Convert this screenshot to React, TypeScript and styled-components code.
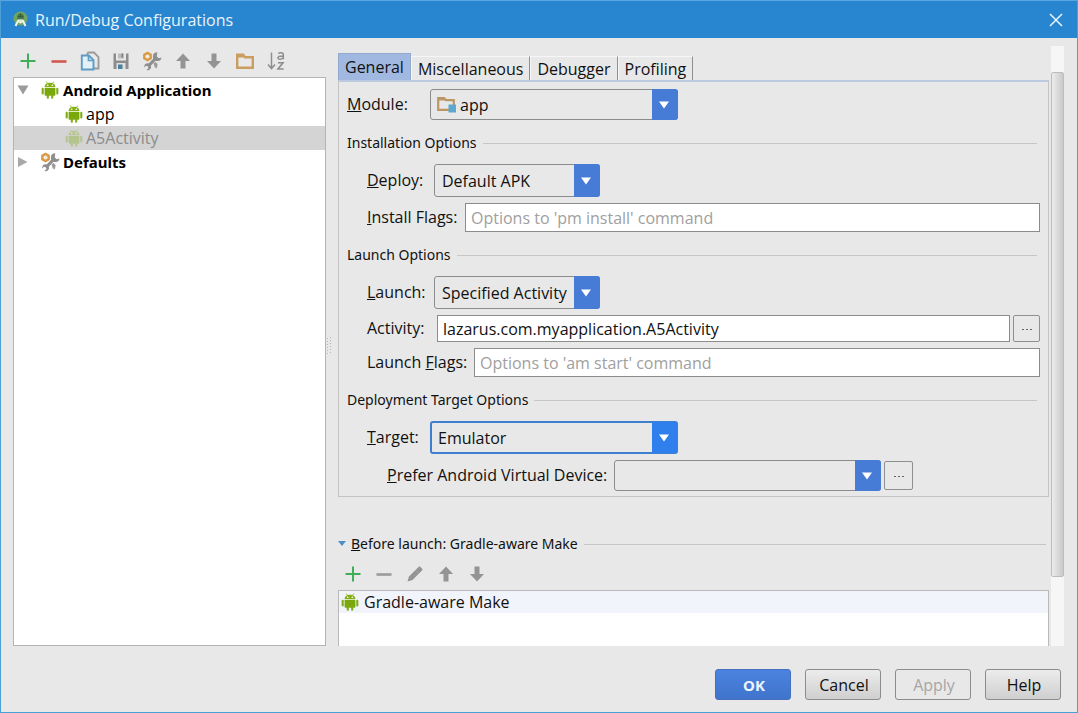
import React, { useState } from 'react';
import styled, { createGlobalStyle, css } from 'styled-components';

const GlobalStyle = createGlobalStyle`
  * { box-sizing: border-box; }
  body { margin: 0; background: #e8e8e8; }
  body, button, input, select {
    font-family: "Open Sans", "Noto Sans", sans-serif;
    font-size: 16px;
    line-height: 20px;
    color: #111;
  }
`;

const Dialog = styled.div`
  display: flex;
  flex-direction: column;
  height: 100vh;
  min-height: 560px;
  background: #e8e8e8;
  border: 1px solid #4d9fd8;
  border-top-color: #58a5df;
`;

const TitleBar = styled.header`
  flex: none;
  display: flex;
  align-items: center;
  gap: 6px;
  height: 37px;
  padding: 0 13px 0 11px;
  background: #2885cf;
`;

const Title = styled.h1`
  flex: 1;
  margin: 0;
  font-size: 16px;
  font-weight: 400;
  color: #eaf4fc;
`;

const PlainButton = styled.button`
  display: flex;
  align-items: center;
  justify-content: center;
  padding: 0;
  border: 0;
  background: none;
`;

const Main = styled.main`
  flex: 1;
  min-height: 0;
  display: flex;
  padding: 8px 13px 0 12px;
`;

const Sidebar = styled.aside`
  flex: none;
  width: 313px;
  display: flex;
  flex-direction: column;
`;

const Toolbar = styled.div`
  flex: none;
  display: flex;
  height: 31px;
  padding-bottom: 1px;
`;

const ToolButton = styled(PlainButton)`
  width: 31px;
  padding-right: 1px;
`;

const Tree = styled.ul`
  flex: 1;
  margin: 0;
  padding: 0;
  list-style: none;
  background: #fff;
  border: 1px solid #b4b4b4;
`;

const TreeRow = styled.li<{ $depth?: number; $selected?: boolean; $group?: boolean }>`
  display: flex;
  align-items: center;
  gap: 3px;
  height: 24px;
  padding-left: ${(p) => (p.$depth ? 51 : 3)}px;
  color: ${(p) => (p.$selected ? '#8c8c8c' : '#000')};
  background: ${(p) => (p.$selected ? '#d4d4d4' : 'transparent')};
  ${(p) =>
    p.$group &&
    css`
      font-family: "Noto Sans", "Open Sans", sans-serif;
      font-size: 15px;
      font-weight: 700;
    `}
`;

const Expander = styled(PlainButton)`
  width: 12px;
  margin-right: 8px;
`;

const IconSlot = styled.span`
  flex: none;
  width: 20px;
  display: flex;
  justify-content: center;
`;

const Splitter = styled.div`
  flex: none;
  width: 12px;
  display: flex;
  align-items: center;
`;

const ScrollArea = styled.section`
  flex: 1;
  min-width: 0;
  display: flex;
  flex-direction: column;
  overflow: hidden;
`;

const Tabs = styled.div`
  flex: none;
  display: flex;
  align-items: flex-end;
  height: 34px;
  margin-right: 1px;
`;

const Tab = styled.button<{ $active?: boolean }>`
  height: 24px;
  padding: 0 6px;
  border: 1px solid #f6f6f6;
  border-right-color: #8f8f8f;
  border-bottom: 0;
  background: #e8e8e8;
  white-space: nowrap;
  ${(p) =>
    p.$active &&
    css`
      height: 27px;
      border-color: #93aad0;
      background: #a1b9e0;
    `}
`;

const TabPanel = styled.div`
  flex: none;
  display: flex;
  flex-direction: column;
  padding: 7px 8px 5px;
  border: 1px solid #c4c4c4;
  border-top: 2px solid #bccbe0;
`;

const Row = styled.div<{ $indent?: number; $gap?: number }>`
  display: flex;
  align-items: center;
  margin-top: ${(p) => p.$gap ?? 6}px;
  padding-left: ${(p) => p.$indent ?? 20}px;
`;

const Label = styled.label<{ $width: number }>`
  flex: none;
  width: ${(p) => p.$width}px;
  padding-bottom: 1px;
  white-space: nowrap;
`;

const Heading = styled.h2<{ $gap?: number }>`
  display: flex;
  align-items: center;
  gap: 6px;
  height: 24px;
  margin: ${(p) => p.$gap ?? 11}px 3px 3px 0;
  font-family: "Noto Sans", "Open Sans", sans-serif;
  font-size: 14px;
  font-weight: 400;
  &::after {
    content: '';
    flex: 1;
    height: 1px;
    background: #c6c6c6;
  }
`;

const SelectBox = styled.div<{ $width: number; $height: number; $focus?: boolean }>`
  position: relative;
  flex: none;
  display: flex;
  width: ${(p) => p.$width}px;
  height: ${(p) => p.$height}px;
  border: ${(p) => (p.$focus ? '2px solid #3f7fd0' : '1px solid #8c8c8c')};
  border-radius: 3px;
  background: #e8e8e8;
`;

const NativeSelect = styled.select<{ $pad: number }>`
  appearance: none;
  width: 100%;
  padding: 0 24px 0 ${(p) => p.$pad}px;
  border: 0;
  outline: 0;
  background: transparent;
`;

const SelectArrow = styled.span<{ $focus?: boolean }>`
  position: absolute;
  top: -1px;
  right: ${(p) => (p.$focus ? -2 : -1)}px;
  bottom: -1px;
  width: 26px;
  padding-right: 2px;
  display: flex;
  align-items: center;
  justify-content: center;
  border-radius: 0 3px 3px 0;
  background: ${(p) => (p.$focus ? '#2f80ed' : '#467bd6')};
  pointer-events: none;
`;

const SelectIcon = styled.span`
  position: absolute;
  left: 5px;
  top: 4px;
  display: flex;
  pointer-events: none;
`;

const TextInput = styled.input<{ $height: number }>`
  flex: 1;
  min-width: 0;
  height: ${(p) => p.$height}px;
  padding: 0 5px;
  border: 1px solid #8c8c8c;
  outline: 0;
  background: #fff;
  &::placeholder {
    color: #a0a0a0;
    opacity: 1;
  }
`;

const MoreButton = styled(PlainButton)<{ $width: number; $height: number }>`
  flex: none;
  width: ${(p) => p.$width}px;
  height: ${(p) => p.$height}px;
  margin-left: 3px;
  border: 1px solid #8f8f8f;
  border-radius: 2px;
  background: #e8e8e8;
`;

const BeforeLaunch = styled.div`
  flex: 1;
  min-height: 0;
  display: flex;
  flex-direction: column;
  padding-top: 35px;
`;

const BeforeHeader = styled.div`
  display: flex;
  align-items: center;
  gap: 5px;
  height: 24px;
  margin-bottom: 3px;
  h2 {
    flex: 1;
    margin: 0 3px 0 0;
  }
`;

const TaskList = styled.ul`
  flex: 1;
  margin: 0;
  padding: 0;
  list-style: none;
  background: #fff;
  border: 1px solid #b9b9b9;
  border-bottom: 0;
`;

const Task = styled.li`
  display: flex;
  align-items: center;
  gap: 5px;
  height: 22px;
  padding-left: 2px;
  background: #f1f4fa;
`;

const ScrollTrack = styled.div`
  flex: none;
  width: 13px;
  margin-left: 2px;
  display: flex;
  flex-direction: column;
  padding-top: 26px;
  background: #f6f6f6;
`;

const ScrollThumb = styled.div`
  height: 88%;
  border: 1px solid #bdbdbd;
  border-radius: 2px;
  background: linear-gradient(to right, #ececec, #c9c9c9);
`;

const Footer = styled.footer`
  flex: none;
  display: flex;
  justify-content: flex-end;
  gap: 14px;
  padding: 23px 16px 12px;
`;

const ActionButton = styled.button<{ $primary?: boolean }>`
  width: 76px;
  height: 31px;
  padding: 0 0 0 2px;
  border: 1px solid #8c8c8c;
  border-radius: 3px;
  background: linear-gradient(#ececec, #cfcfcf);
  &:disabled {
    color: #a6a6a6;
    background: #e8e8e8;
  }
  ${(p) =>
    p.$primary &&
    css`
      border-color: #4470bd;
      background: linear-gradient(#4a83e0, #4074cb);
      color: #eef4fd;
      font-family: "Noto Sans", "Open Sans", sans-serif;
      font-size: 15px;
      font-weight: 700;
    `}
`;

const Svg = ({ size = 20, children }: { size?: number; children: React.ReactNode }) => (
  <svg width={size} height={size} viewBox={`0 0 ${size} ${size}`} fill="none" aria-hidden="true">
    {children}
  </svg>
);

const Android = ({ faded }: { faded?: boolean }) => (
  <svg width="18" height="18" viewBox="0 0 18 18" fill="none" opacity={faded ? 0.35 : 1} aria-hidden="true">
    <path d="M5.200 .5l1.500 2.300M12.800 .5l-1.500 2.300" stroke="#9fc23c" strokeWidth="1" />
    <path d="M3.600 6.200C3.600 3.300 6 1.800 9 1.800s5.400 1.500 5.400 4.400z" fill="#86b016" />
    <circle cx="6.700" cy="4.300" r=".8" fill="#fff" />
    <circle cx="11.300" cy="4.300" r=".8" fill="#fff" />
    <path d="M3.600 7h10.800v6.700a1 1 0 0 1-1 1H4.600a1 1 0 0 1-1-1z" fill="#7aa80c" />
    <path d="M1.700 7.800v4.600M16.300 7.800v4.600M6.800 13v3.700M11.200 13v3.700" stroke="#7fac12" strokeWidth="2.100" strokeLinecap="round" />
  </svg>
);

const Plus = () => <Svg><path d="M10 2.500v15M2.500 10h15" stroke="#3fae58" strokeWidth="2" /></Svg>;
const Minus = ({ color }: { color: string }) => (
  <Svg><path d="M2.500 10.500h15" stroke={color} strokeWidth="2.600" /></Svg>
);
const ArrowUp = () => <Svg><path d="M10 2.500l7 7.500H12.500v7.500h-5V10H3z" fill="#949494" /></Svg>;
const ArrowDown = () => <Svg><path d="M10 17.500l7-7.500H12.500V2.500h-5V10H3z" fill="#949494" /></Svg>;
const Pencil = () => (
  <Svg>
    <path d="M2.500 17.500l1.500-5 6.500-6.500 3.500 3.500-6.500 6.500z" fill="#949494" />
    <path d="M10.500 6l3-3c.6-.6 1.300-.5 1.900 0l1.600 1.600c.5.6.6 1.300 0 1.900l-3 3z" fill="#949494" />
  </Svg>
);
const Copy = () => (
  <Svg>
    <path d="M7.500 1.500H14l4.500 4.500v11.500H14" stroke="#9a9a9a" strokeWidth="1.800" />
    <path d="M7.500 1.500v2.500" stroke="#9a9a9a" strokeWidth="1.800" />
    <path d="M1.800 4.500h7l4.700 4.700v9.300H1.800z" fill="#e3f0f8" stroke="#5d9cc5" strokeWidth="1.900" />
    <path d="M8.500 4.500v5h5" stroke="#5d9cc5" strokeWidth="1.700" />
  </Svg>
);
const Save = () => (
  <Svg>
    <path d="M2.500 2.500H5V9.500h10V2.500h2.500v15.500h-15z" fill="#8d8d8d" />
    <path d="M7 2.500h6V7.500H7z" fill="#bcbcbc" />
    <path d="M10.500 2.500H12v4h-1.500z" fill="#808080" />
    <path d="M5.500 12h9v6h-9z" fill="#e0e0e0" />
    <path d="M7 13.500h4.500V18H7z" fill="#4d7f9e" />
  </Svg>
);
const Wrench = () => (
  <Svg>
    <path d="M6 15.500l7.500-8" stroke="#8e8e8e" strokeWidth="3.200" />
    <path d="M15.300 1.200a4.400 4.400 0 1 0 4.300 5.300l-2.800.8-2-1.700z" fill="#8e8e8e" />
    <path d="M4.300 12.500a3.600 3.600 0 0 1 4.200 5.300c-.8 1.300-2.600 1.900-4 1.200l2-2-.6-1.800-2-.4-1.700 1.700c-.2-1.800.6-3.400 2.100-4z" fill="#8e8e8e" />
    <path d="M11.500 12.200l2.200-1.200 2 2.200-1 4.300-2-1.200z" fill="#9c9c9c" />
    <path d="M5.500 .5l4.400 2.500v5l-4.400 2.500L1.100 8V3z" fill="#d99b47" />
    <circle cx="5.500" cy="5.500" r="2.100" fill="#f6ead8" />
  </Svg>
);
const Folder = () => (
  <Svg>
    <path d="M2.200 16.800V3.800h6l1.600 2.400h8v10.600z" stroke="#c99e60" strokeWidth="2.400" />
    <path d="M2 3h6.500v3.500H2z" fill="#c99e60" />
  </Svg>
);
const ModuleFolder = () => (
  <Svg>
    <path d="M2.200 15.800V4h6l1.600 2.200h8v9.600z" stroke="#bd9763" strokeWidth="2.200" />
    <path d="M2 3h6.500v3.500H2z" fill="#bd9763" />
    <path d="M12.500 10.500H20v8h-7.500z" fill="#5ea7cf" />
  </Svg>
);
const SortAz = () => (
  <Svg>
    <path d="M5.500 1.500v16M2 13.500l3.500 4 3.500-4" stroke="#8e8e8e" strokeWidth="1.500" />
    <path d="M12.300 2.500c1-1.200 5-1.300 5 1v4.800M17.300 5c-2.500 0-5.400 0-5.400 1.700 0 2.200 4.200 2 5.400-.2" stroke="#8e8e8e" strokeWidth="1.500" />
    <path d="M12 11.800h5l-5 6.200h5.700" stroke="#8e8e8e" strokeWidth="1.600" />
  </Svg>
);
const Caret = ({ color, right }: { color: string; right?: boolean }) => (
  <Svg size={12}><path d={right ? 'M1 1v10l9.500-5z' : 'M.5 1.500h11L6 10.500z'} fill={color} /></Svg>
);
const DropArrow = () => <Svg size={12}><path d="M1 2.500h10L6 9.500z" fill="#fff" /></Svg>;
const Dots = () => <Svg size={12}><path d="M1 6.500h2M5 6.500h2M9 6.500h2" stroke="#666" /></Svg>;
const StudioLogo = () => (
  <Svg size={17}>
    <circle cx="8.500" cy="7.500" r="7" fill="#71a565" />
    <path d="M5 6a3.500 3.500 0 0 1 7 0v2.500H5z" fill="#4b7c49" />
    <path d="M8.500 2.500v4M6 5.500h5" stroke="#2f5a3c" strokeWidth="1.200" />
    <path d="M3.500 15l2.700-5.500 2.300 2 2.300-2 2.700 5.500" stroke="#eef3e8" strokeWidth="2" strokeLinejoin="round" />
    <path d="M6.500 8.500h4v2.500h-4z" fill="#e3ecdc" />
  </Svg>
);
const Grip = () => (
  <svg width="6" height="20" viewBox="0 0 6 20" aria-hidden="true">
    {[1, 4, 7, 10, 13, 16].map((y) => (
      <g key={y} fill="#b4b4b4">
        <rect x="1" y={y + 1} width="1" height="1" />
        <rect x="4" y={y} width="1" height="1" />
      </g>
    ))}
  </svg>
);

type DropdownProps = {
  id: string;
  options: string[];
  width: number;
  height?: number;
  pad?: number;
  focus?: boolean;
  icon?: React.ReactNode;
};

const Dropdown = ({ id, options, width, height = 33, pad = 7, focus, icon }: DropdownProps) => (
  <SelectBox $width={width} $height={height} $focus={focus}>
    {icon && <SelectIcon>{icon}</SelectIcon>}
    <NativeSelect id={id} $pad={pad}>
      {options.map((o) => <option key={o}>{o}</option>)}
    </NativeSelect>
    <SelectArrow $focus={focus}><DropArrow /></SelectArrow>
  </SelectBox>
);

const sidebarTools: [string, React.ReactNode][] = [
  ['Add', <Plus />],
  ['Remove', <Minus color="#d2574f" />],
  ['Copy', <Copy />],
  ['Save', <Save />],
  ['Edit defaults', <Wrench />],
  ['Move up', <ArrowUp />],
  ['Move down', <ArrowDown />],
  ['New folder', <Folder />],
  ['Sort', <SortAz />],
];

const taskTools: [string, React.ReactNode][] = [
  ['Add task', <Plus />],
  ['Remove task', <Minus color="#9a9a9a" />],
  ['Edit task', <Pencil />],
  ['Move task up', <ArrowUp />],
  ['Move task down', <ArrowDown />],
];

const tabs = ['General', 'Miscellaneous', 'Debugger', 'Profiling'];

export default function App() {
  const [tab, setTab] = useState('General');
  const [activity, setActivity] = useState('lazarus.com.myapplication.A5Activity');

  return (
    <>
      <GlobalStyle />
      <Dialog>
        <TitleBar>
          <StudioLogo />
          <Title>Run/Debug Configurations</Title>
          <PlainButton aria-label="Close">
            <Svg size={16}><path d="M2 2l12 12M14 2L2 14" stroke="#eaf4fc" strokeWidth="1.500" /></Svg>
          </PlainButton>
        </TitleBar>

        <Main>
          <Sidebar>
            <Toolbar>
              {sidebarTools.map(([name, icon]) => (
                <ToolButton key={name} aria-label={name}>{icon}</ToolButton>
              ))}
            </Toolbar>
            <Tree>
              <TreeRow $group>
                <Expander aria-label="Collapse"><Caret color="#9b9b9b" /></Expander>
                <IconSlot><Android /></IconSlot>
                Android Application
              </TreeRow>
              <TreeRow $depth={1}><Android />app</TreeRow>
              <TreeRow $depth={1} $selected><Android faded />A5Activity</TreeRow>
              <TreeRow $group>
                <Expander aria-label="Expand"><Caret color="#a8a8a8" right /></Expander>
                <IconSlot><Wrench /></IconSlot>
                Defaults
              </TreeRow>
            </Tree>
          </Sidebar>

          <Splitter><Grip /></Splitter>

          <ScrollArea>
            <Tabs role="tablist">
              {tabs.map((t) => (
                <Tab key={t} role="tab" aria-selected={t === tab} $active={t === tab} onClick={() => setTab(t)}>
                  {t}
                </Tab>
              ))}
            </Tabs>
            <TabPanel role="tabpanel">
              <Row $indent={0} $gap={0}>
                <Label htmlFor="module" $width={83}><u>M</u>odule:</Label>
                <Dropdown id="module" options={['app']} width={248} height={31} pad={29} icon={<ModuleFolder />} />
              </Row>

              <Heading>Installation Options</Heading>
              <Row>
                <Label htmlFor="deploy" $width={67}><u>D</u>eploy:</Label>
                <Dropdown id="deploy" options={['Default APK']} width={166} />
              </Row>
              <Row>
                <Label htmlFor="install-flags" $width={98}><u>I</u>nstall Flags:</Label>
                <TextInput id="install-flags" $height={29} placeholder="Options to 'pm install' command" />
              </Row>

              <Heading>Launch Options</Heading>
              <Row>
                <Label htmlFor="launch" $width={67}><u>L</u>aunch:</Label>
                <Dropdown id="launch" options={['Specified Activity']} width={166} />
              </Row>
              <Row>
                <Label htmlFor="activity" $width={70}>Activity:</Label>
                <TextInput id="activity" $height={27} value={activity} onChange={(e) => setActivity(e.target.value)} />
                <MoreButton aria-label="Choose activity" $width={27} $height={27}><Dots /></MoreButton>
              </Row>
              <Row>
                <Label htmlFor="launch-flags" $width={107}>Launch <u>F</u>lags:</Label>
                <TextInput id="launch-flags" $height={29} placeholder="Options to 'am start' command" />
              </Row>

              <Heading>Deployment Target Options</Heading>
              <Row>
                <Label htmlFor="target" $width={63}><u>T</u>arget:</Label>
                <Dropdown id="target" options={['Emulator']} width={248} pad={6} focus />
              </Row>
              <Row $indent={40}>
                <Label htmlFor="avd" $width={227}><u>P</u>refer Android Virtual Device:</Label>
                <Dropdown id="avd" options={['']} width={267} height={31} />
                <MoreButton aria-label="Manage devices" $width={29} $height={29}><Dots /></MoreButton>
              </Row>
            </TabPanel>

            <BeforeLaunch>
              <BeforeHeader>
                <PlainButton aria-label="Collapse before launch">
                  <Svg size={8}><path d="M0 1h8L4 6z" fill="#4b8fc9" /></Svg>
                </PlainButton>
                <Heading $gap={0}><span><u>B</u>efore launch: Gradle-aware Make</span></Heading>
              </BeforeHeader>
              <Toolbar>
                {taskTools.map(([name, icon]) => (
                  <ToolButton key={name} aria-label={name}>{icon}</ToolButton>
                ))}
              </Toolbar>
              <TaskList>
                <Task><Android />Gradle-aware Make</Task>
              </TaskList>
            </BeforeLaunch>
          </ScrollArea>

          <ScrollTrack><ScrollThumb /></ScrollTrack>
        </Main>

        <Footer>
          <ActionButton $primary>OK</ActionButton>
          <ActionButton>Cancel</ActionButton>
          <ActionButton disabled>Apply</ActionButton>
          <ActionButton>Help</ActionButton>
        </Footer>
      </Dialog>
    </>
  );
}
